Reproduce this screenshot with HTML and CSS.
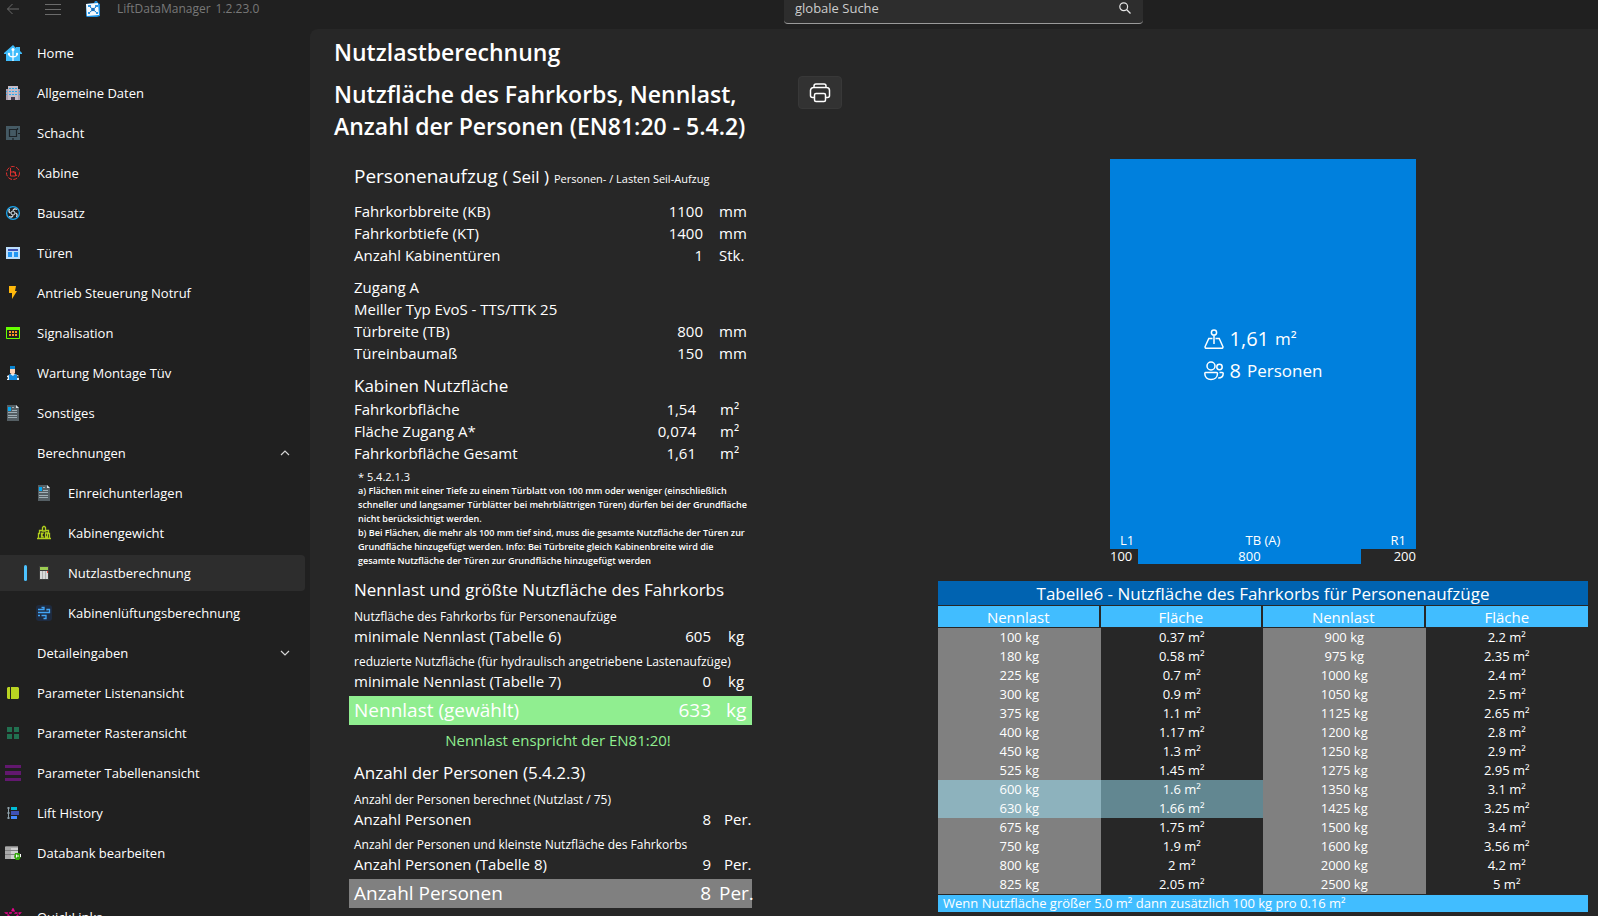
FILE: index.html
```html
<!DOCTYPE html>
<html lang="de">
<head>
<meta charset="utf-8">
<title>LiftDataManager</title>
<link rel="stylesheet" href="styles.css">
</head>
<body>
<header class="titlebar">
  <div class="brand">
    <button class="bar-btn back" aria-label="Zurück"><svg width="14" height="12" viewBox="0 0 14 12" fill="none" stroke="#6b6b6b"><path d="M13 6H1.500M6.500 1L1.500 6l5 5"/></svg></button>
    <button class="bar-btn menu" aria-label="Menü"><svg width="16" height="12" viewBox="0 0 16 12" stroke="#6b6b6b"><path d="M0 1.500h16M0 6.500h16M0 11.500h16"/></svg></button>
    <svg class="logo" width="16" height="16" viewBox="0 0 16 16"><path d="M1 3l8-1 1-2h2l1 2 2 1v12l-3 1H2l-1-1z" fill="#1b8fe0"/><path d="M1 3l12-1 1 12-12 1z" fill="#f4f9fd"/><path d="M4.500 5.500L8 8.500l3.500-3M4.500 11.500L8 8.500l3.500 3" stroke="#1670bd" stroke-width="1" fill="none"/><circle cx="8" cy="8.500" r="1.800" fill="#1670bd"/><path d="M3 4h3v2H3zM10 4h3v2h-3zM3 11h2v2H3zM11 11h2v2h-2z" fill="#2a96e6"/></svg>
    <span>LiftDataManager</span><span class="version">1.2.23.0</span>
  </div>
  <div class="search">
    <input type="text" placeholder="globale Suche" aria-label="globale Suche">
    <svg width="12" height="12" viewBox="0 0 12 12" fill="none" stroke="#e6e6e6" stroke-width="1.200"><circle cx="4.700" cy="4.700" r="3.900"/><path d="M7.500 7.500l4 4"/></svg>
  </div>
</header>
<div class="shell">
  <nav class="side">
    <ul class="nav">
      <li><a href="#"><svg viewBox="0 0 18 18"><path d="M9 1l3 3V3h4v4l2 2v1h-2v7H2v-7H0V9z" fill="#3fbcfb"/><path d="M9 5v12M5 10.500q0 2 4 2.500q4-.5 4-2.500" stroke="#fff" stroke-width="1.200" fill="none"/><circle cx="9" cy="5.500" r="1.500" fill="#fff"/><circle cx="5" cy="10" r="1.200" fill="#fff"/><circle cx="13" cy="10" r="1.200" fill="#fff"/></svg>Home</a></li>
      <li><a href="#"><svg viewBox="0 0 18 18"><path d="M2 5h2V2h10v3h2v11H2z" fill="#a99fae"/><path d="M4 2h10v14H4z" fill="#c4bcc8"/><path d="M5 4h2v1H5zM8 4h2v1H8zM11 4h2v1h-2zM5 7h2v1H5zM8 7h2v1H8zM11 7h2v1h-2zM5 10h2v1H5zM8 10h2v1H8zM11 10h2v1h-2zM2 7h1v1H2zM2 10h1v1H2zM15 7h1v1h-1zM15 10h1v1h-1z" fill="#27a9ee"/><path d="M7 13h4v3H7z" fill="#43394b"/></svg>Allgemeine Daten</a></li>
      <li><a href="#"><svg viewBox="0 0 18 18"><path d="M2 2h14v14H2z" fill="#455a64"/><path d="M5.500 5.500h7v7h-7zM12 5.500h1.500V4M9 14v2M14 9.500h2" fill="none" stroke="#1c2226" stroke-width="1.200"/></svg>Schacht</a></li>
      <li><a href="#"><svg viewBox="0 0 18 18" fill="none" stroke="#e0312f" stroke-width="1"><circle cx="9" cy="9" r="6.500" stroke-dasharray="4 1.500"/><path d="M6.500 4v8h5V8H7M9 7l4 5"/></svg>Kabine</a></li>
      <li><a href="#"><svg viewBox="0 0 18 18" fill="none"><circle cx="9" cy="9" r="6.400" stroke="#1aa5ee" stroke-width="1.300"/><path d="M9 6.500Q10 4 13 5.500M11.500 9Q14 10 12.500 13M9 11.500Q8 14 5 12.500M6.500 9Q4 8 5.500 5" stroke="#d8e4ea" stroke-width="1.300"/><circle cx="9" cy="9" r="2" stroke="#d8e4ea"/></svg>Bausatz</a></li>
      <li><a href="#"><svg viewBox="0 0 18 18"><path d="M2 3h14v12H2z" fill="#bbdefb"/><path d="M4 5h10v2H4z" fill="#3f51b5"/><path d="M4 8h4v5H4zM10 8h4v5h-4z" fill="#2196f3"/></svg>Türen</a></li>
      <li><a href="#"><svg viewBox="0 0 18 18"><path d="M5 2h7l-1 5h2l-5 8V9H5z" fill="#ffb90c"/></svg>Antrieb Steuerung Notruf</a></li>
      <li><a href="#"><svg viewBox="0 0 18 18"><path d="M2.500 4v10.500h13V4" fill="none" stroke="#66ff00" stroke-width="1"/><path d="M2 3h14v3H2z" fill="#66ff00"/><path d="M5 7h2v2H5zM8 7h2v2H8zM11 7h2v2h-2zM5 10h2v2H5zM8 10h2v2H8zM11 10h2v2h-2z" fill="#ff9326"/></svg>Signalisation</a></li>
      <li><a href="#"><svg viewBox="0 0 18 18"><path d="M6 2h5v3H6z" fill="#0a84d0"/><path d="M6 5h5v4l-2 2-3-2z" fill="#ffd3b6"/><path d="M3 16v-4l4-2h4l4 2v4z" fill="#e6eef5"/><path d="M6 10l3 2 2-2 2 1v5H5v-5z" fill="#148be0"/><path d="M13 12h2v2h-2zM3 13h1v2H3z" fill="#555"/></svg>Wartung Montage Tüv</a></li>
      <li><a href="#"><svg viewBox="0 0 18 18"><path d="M3 1h9l3 3v13H3z" fill="#545e63"/><path d="M12 1l3 3h-3z" fill="#dfe4e7"/><path d="M4 3h3v4H4z" fill="#03a9f4"/><path d="M8 6.500h5M4 8.500h9M4 11.500h9M4 13.500h9M8 3.500h2" stroke="#9fadb4"/></svg>Sonstiges</a></li>
      <li><button class="group" aria-expanded="true">Berechnungen<svg class="chev" viewBox="0 0 10 10" fill="none" stroke="#d6d6d6" stroke-width="1.200"><path d="M1 7l4-4 4 4"/></svg></button>
        <ul class="nav sub">
          <li><a href="#"><svg viewBox="0 0 18 18"><path d="M3 1h9l3 3v13H3z" fill="#545e63"/><path d="M12 1l3 3h-3z" fill="#dfe4e7"/><path d="M4 3h3v4H4z" fill="#03a9f4"/><path d="M8 6.500h5M4 8.500h9M4 11.500h9M4 13.500h9M8 3.500h2" stroke="#9fadb4"/></svg>Einreichunterlagen</a></li>
          <li><a href="#"><svg viewBox="0 0 18 18" fill="none" stroke="#b1cf1d" stroke-width="1.300"><path d="M2 14.500h14M3.500 14V9.500h1V6.500h3M14.500 14V9.500h-1V6.500h-3M7.500 7V3.500l1-1h1l1 1V7zM6.500 8.500v5M8.500 8.500l-2 2.500 2 2.500M10.500 9v4h2V9z"/></svg>Kabinengewicht</a></li>
          <li><a href="#" class="active" aria-current="page"><svg viewBox="0 0 18 18"><path d="M4 2h10v14H4z" fill="#3c3c3c"/><path d="M5 3h8v3H5z" fill="#9ccc52"/><path d="M5 7h8v8H5z" fill="#d9d9d9"/><path d="M7 7h1v8H7zM10 7h1v8h-1z" fill="#b0b0b0"/><path d="M12 7h1v2h-1z" fill="#f0473c"/></svg>Nutzlastberechnung</a></li>
          <li><a href="#"><svg viewBox="0 0 18 18" fill="none"><rect x="1" y="1" width="16" height="16" rx="3" fill="#1e2b40"/><path d="M3 5.500h6V3.500H6.500M3 8.500h11.500V5.500H12v1M3 11.500h2M6.500 11.500H11v3H8.500" stroke="#42a5f5" stroke-width="1.300"/></svg>Kabinenlüftungsberechnung</a></li>
        </ul>
      </li>
      <li><button class="group" aria-expanded="false">Detaileingaben<svg class="chev" viewBox="0 0 10 10" fill="none" stroke="#d6d6d6" stroke-width="1.200"><path d="M1 3l4 4 4-4"/></svg></button></li>
      <li><a href="#"><svg viewBox="0 0 18 18"><path d="M3 4l1-1h2v12H4l-1-1zM7 3h7l1 1v10l-1 1H7z" fill="#b9d422"/></svg>Parameter Listenansicht</a></li>
      <li><a href="#"><svg viewBox="0 0 18 18"><path d="M3 3h5v5H3zM10 3h5v5h-5zM3 10h5v5H3zM10 10h5v5h-5z" fill="#217050"/></svg>Parameter Rasteransicht</a></li>
      <li><a href="#"><svg viewBox="0 0 18 18"><path d="M1 1h16v3H1zM1 7h16v4H1zM1 14h16v3H1z" fill="#62186f"/></svg>Parameter Tabellenansicht</a></li>
      <li><a href="#"><svg viewBox="0 0 18 18"><path d="M4.500 3v12M3 4h3M3 9h3M3 14h3" stroke="#8fa2ac"/><path d="M7 3h6v3H7z" fill="#00bcd4"/><path d="M7 7h8v4H7z" fill="#3f51b5"/><path d="M7 12h6v3H7z" fill="#448aff"/></svg>Lift History</a></li>
      <li><a href="#"><svg viewBox="0 0 18 18"><path d="M2 2h12v13H1V3z" fill="#a9a9a9"/><path d="M7 4h7v11H7z" fill="#d0d0d0"/><path d="M1 6.500h13M1 10.500h13M2 2.500h12" stroke="#808080"/><path d="M11 9h4l2 2v2l-2 3h-3l-2-3z" fill="#35a80c"/><path d="M12.500 10.500v3M12 12h3M16.500 10v3" stroke="#fff"/></svg>Databank bearbeiten</a></li>
    </ul>
    <ul class="nav foot">
      <li><a href="#"><svg viewBox="0 0 18 18" fill="none" stroke="#e6008c" stroke-width="1.600"><path d="M9 1l2 4 5 0-4 4 2 6-5-3-5 3 2-6-4-4 5 0z" stroke-dasharray="3 1"/></svg>QuickLinks</a></li>
    </ul>
  </nav>
  <main class="panel">
    <h1>Nutzlastberechnung</h1>
    <div class="content">
      <section class="calc">
        <h2>Nutzfläche des Fahrkorbs, Nennlast, Anzahl der Personen (EN81:20 - 5.4.2)</h2>
        <div class="data">
          <p class="type">Personenaufzug <span class="drive">( Seil )</span> <small>Personen- / Lasten Seil-Aufzug</small></p>
          <div class="rows mm">
            <p><span>Fahrkorbbreite (KB)</span><b>1100</b><i>mm</i></p>
            <p><span>Fahrkorbtiefe (KT)</span><b>1400</b><i>mm</i></p>
            <p><span>Anzahl Kabinentüren</span><b>1</b><i>Stk.</i></p>
          </div>
          <div class="rows mm">
            <p><span>Zugang A</span></p>
            <p><span>Meiller Typ EvoS - TTS/TTK 25</span></p>
            <p><span>Türbreite (TB)</span><b>800</b><i>mm</i></p>
            <p><span>Türeinbaumaß</span><b>150</b><i>mm</i></p>
          </div>
          <h3>Kabinen Nutzfläche</h3>
          <div class="rows area">
            <p><span>Fahrkorbfläche</span><b>1,54</b><i>m²</i></p>
            <p><span>Fläche Zugang A*</span><b>0,074</b><i>m²</i></p>
            <p><span>Fahrkorbfläche Gesamt</span><b>1,61</b><i>m²</i></p>
          </div>
          <div class="notes">
            <p class="ref">* 5.4.2.1.3</p>
            <p>a) Flächen mit einer Tiefe zu einem Türblatt von 100 mm oder weniger (einschließlich<br>schneller und langsamer Türblätter bei mehrblättrigen Türen) dürfen bei der Grundfläche<br>nicht berücksichtigt werden.</p>
            <p>b) Bei Flächen, die mehr als 100 mm tief sind, muss die gesamte Nutzfläche der Türen zur<br>Grundfläche hinzugefügt werden. Info: Bei Türbreite gleich Kabinenbreite wird die<br>gesamte Nutzfläche der Türen zur Grundfläche hinzugefügt werden</p>
          </div>
          <h3>Nennlast und größte Nutzfläche des Fahrkorbs</h3>
          <div class="rows load">
            <p class="hint">Nutzfläche des Fahrkorbs für Personenaufzüge</p>
            <p><span>minimale Nennlast (Tabelle 6)</span><b>605</b><i>kg</i></p>
            <p class="hint">reduzierte Nutzfläche (für hydraulisch angetriebene Lastenaufzüge)</p>
            <p><span>minimale Nennlast (Tabelle 7)</span><b>0</b><i>kg</i></p>
            <p class="result ok"><span>Nennlast (gewählt)</span><b>633</b><i>kg</i></p>
          </div>
          <p class="message">Nennlast enspricht der EN81:20!</p>
          <h3>Anzahl der Personen (5.4.2.3)</h3>
          <div class="rows persons">
            <p class="hint">Anzahl der Personen berechnet (Nutzlast / 75)</p>
            <p><span>Anzahl Personen</span><b>8</b><i>Per.</i></p>
            <p class="hint">Anzahl der Personen und kleinste Nutzfläche des Fahrkorbs</p>
            <p><span>Anzahl Personen (Tabelle 8)</span><b>9</b><i>Per.</i></p>
            <p class="result"><span>Anzahl Personen</span><b>8</b><i>Per.</i></p>
          </div>
        </div>
      </section>
      <button class="print" aria-label="Drucken"><svg width="22" height="20" viewBox="0 0 22 20" fill="none" stroke="#fff" stroke-width="1.500" stroke-linejoin="round"><path d="M5.500 14.500H3.500a2 2 0 0 1-2-2V7.500a3 3 0 0 1 3-3h13a3 3 0 0 1 3 3v5a2 2 0 0 1-2 2h-2M5 4.500V3a2 2 0 0 1 2-2h8a2 2 0 0 1 2 2v1.500"/><rect x="5.500" y="10.500" width="11" height="8" rx="1.500"/></svg></button>
      <section class="result-view">
        <div class="cab">
          <div class="floor">
            <div class="facts">
              <p><svg width="20" height="20" viewBox="0 0 20 20" fill="none" stroke="#fff" stroke-width="1.500"><circle cx="10" cy="3.500" r="2.600"/><path d="M10 6.200V15M8.500 9.500H4.800L1 17.800q0 1.500 1 1.500h16q1 0 1-1.500L15.200 9.500h-3.700"/></svg><b>1,61</b> m²</p>
              <p><svg width="20" height="20" viewBox="0 0 20 20" fill="none" stroke="#fff" stroke-width="1.500"><circle cx="7" cy="5" r="4"/><circle cx="15.500" cy="6" r="2.700"/><path d="M1.500 11.500h11q1 0 1 1c0 4-3 6-6.500 6S.8 16.500.8 12.500q0-1 .7-1zM15.500 11.500h2.700q1 0 1 1c0 3-2 4.500-5 4.500"/></svg><b>8</b> Personen</p>
            </div>
            <div class="labels"><span>L1</span><span>TB (A)</span><span>R1</span></div>
          </div>
          <div class="door"><span>100</span><span class="opening">800</span><span class="right">200</span></div>
        </div>
        <table class="table6">
          <caption>Tabelle6 - Nutzfläche des Fahrkorbs für Personenaufzüge</caption>
          <thead><tr><th>Nennlast</th><th>Fläche</th><th>Nennlast</th><th>Fläche</th></tr></thead>
          <tbody>
            <tr><td>100 kg</td><td>0.37 m²</td><td>900 kg</td><td>2.2 m²</td></tr>
            <tr><td>180 kg</td><td>0.58 m²</td><td>975 kg</td><td>2.35 m²</td></tr>
            <tr><td>225 kg</td><td>0.7 m²</td><td>1000 kg</td><td>2.4 m²</td></tr>
            <tr><td>300 kg</td><td>0.9 m²</td><td>1050 kg</td><td>2.5 m²</td></tr>
            <tr><td>375 kg</td><td>1.1 m²</td><td>1125 kg</td><td>2.65 m²</td></tr>
            <tr><td>400 kg</td><td>1.17 m²</td><td>1200 kg</td><td>2.8 m²</td></tr>
            <tr><td>450 kg</td><td>1.3 m²</td><td>1250 kg</td><td>2.9 m²</td></tr>
            <tr><td>525 kg</td><td>1.45 m²</td><td>1275 kg</td><td>2.95 m²</td></tr>
            <tr class="hit"><td>600 kg</td><td>1.6 m²</td><td>1350 kg</td><td>3.1 m²</td></tr>
            <tr class="hit"><td>630 kg</td><td>1.66 m²</td><td>1425 kg</td><td>3.25 m²</td></tr>
            <tr><td>675 kg</td><td>1.75 m²</td><td>1500 kg</td><td>3.4 m²</td></tr>
            <tr><td>750 kg</td><td>1.9 m²</td><td>1600 kg</td><td>3.56 m²</td></tr>
            <tr><td>800 kg</td><td>2 m²</td><td>2000 kg</td><td>4.2 m²</td></tr>
            <tr><td>825 kg</td><td>2.05 m²</td><td>2500 kg</td><td>5 m²</td></tr>
          </tbody>
          <tfoot><tr><td colspan="4">Wenn Nutzfläche größer 5.0 m² dann zusätzlich 100 kg pro 0.16 m²</td></tr></tfoot>
        </table>
      </section>
    </div>
  </main>
</div>
</body>
</html>
```
FILE: styles.css
```css
* { box-sizing: border-box; }
body {
  margin: 0;
  height: 100vh;
  overflow: hidden;
  display: flex;
  flex-direction: column;
  background: #202020;
  color: #fff;
  font: 15px/22px "Open Sans", "Noto Sans", sans-serif;
}
p, h1, h2, h3, ul { margin: 0; padding: 0; }
ul { list-style: none; }
b, i { font-weight: 400; font-style: normal; }
button { border: 0; background: none; color: inherit; font: inherit; padding: 0; }

/* Title bar */
.titlebar {
  flex: none;
  display: grid;
  grid-template-columns: 784px 359px 1fr;
  align-items: start;
  height: 29px;
}
.brand {
  display: flex;
  align-items: center;
  height: 17px;
  padding-left: 6px;
  color: #787878;
  font-size: 12px;
}
.bar-btn { display: flex; }
.menu { margin-left: 25px; }
.logo { margin: 0 16px 0 24px; }
.version { margin-left: 5px; }
.search {
  display: flex;
  height: 24px;
  padding: 0 12px 7px 11px;
  align-items: center;
  justify-content: space-between;
  background: #2d2d2d;
  border-bottom: 1px solid #9a9a9a;
  border-radius: 0 0 4px 4px;
}
.search input {
  flex: 1;
  min-width: 0;
  height: 16px;
  padding: 0;
  border: 0;
  outline: 0;
  background: none;
  color: #ccc;
  font: 13px/16px "Open Sans", "Noto Sans", sans-serif;
}
.search input::placeholder { color: #ccc; opacity: 1; }

/* Navigation */
.shell { flex: 1; min-height: 0; display: flex; }
.side {
  flex: none;
  width: 310px;
  padding: 6px 5px 0 0;
  overflow: hidden;
  font-size: 13px;
}
.nav { display: flex; flex-direction: column; gap: 4px; }
.nav a, .group {
  display: flex;
  align-items: center;
  width: 100%;
  height: 36px;
  padding-left: 4px;
  border-radius: 0 4px 4px 0;
  color: #fff;
  text-decoration: none;
}
.nav svg { flex: none; width: 18px; height: 18px; margin-right: 15px; }
.group { padding-left: 37px; justify-content: space-between; }
.nav .chev { width: 10px; height: 10px; }
.sub { margin-top: 4px; }
.sub a { padding-left: 35px; }
.sub a.active {
  padding-left: 24px;
  background: #2d2d2d;
}
.active::before {
  content: "";
  width: 3px;
  height: 16px;
  margin-right: 8px;
  border-radius: 2px;
  background: #4cc2ff;
}
.foot { margin-top: 28px; }

/* Page */
.panel {
  flex: 1;
  min-width: 0;
  padding: 7px 10px 0 24px;
  background: #272727;
  border-top-left-radius: 8px;
  overflow: hidden;
}
h1, h2 { font-size: 23px; line-height: 32px; font-weight: 600; }
.content {
  display: grid;
  grid-template-columns: 448px 44px 1fr;
  column-gap: 16px;
  align-items: start;
}
h2 { margin-top: 10px; }
.data { width: 403px; margin: 20px 0 0 15px; }
.data h3, .type, .rows p { padding-left: 5px; }
.type { font-size: 19px; line-height: 28px; white-space: nowrap; }
.drive { font-size: 17px; line-height: 20px; }
.type small { font-size: 11px; font-weight: 500; line-height: 14px; }
.rows { margin-top: 10px; }
.rows p {
  display: grid;
  grid-template-columns: 1fr auto auto;
  white-space: nowrap;
}
.mm i { width: 33px; margin-left: 16px; }
.area i { width: 32px; margin-left: 24px; }
.load i { width: 24px; margin-left: 17px; }
.persons i { width: 28px; margin-left: 13px; }
.data h3 { margin-top: 10px; font-size: 17px; line-height: 24px; font-weight: 400; }
h3 + .rows { margin-top: 0; }
.rows .hint { display: block; padding-top: 6px; font-size: 12px; line-height: 17px; }
.rows .result {
  margin-top: 4px;
  background: #808080;
  font-size: 19px;
  line-height: 29px;
}
.rows .ok { background: #90ee90; }
.load .result i { width: 26px; margin-left: 15px; }
.persons .result i { width: 33px; margin-left: 8px; }
.message { margin-top: 4px; padding-left: 15px; color: #90ee90; text-align: center; }
.notes {
  margin-top: 6px;
  padding-left: 9px;
  font-size: 9px;
  font-weight: 600;
  line-height: 14px;
  white-space: nowrap;
}
.notes .ref { font-size: 11px; font-weight: 400; }

.print {
  display: grid;
  place-items: center;
  height: 33px;
  margin-top: 8px;
  background: #323232;
  border: 1px solid #383838;
  border-radius: 4px;
}

/* Cab plan */
.result-view { margin: 91px 0 0 80px; }
.cab { width: 306px; margin: 0 auto; font-size: 13px; }
.floor {
  display: flex;
  flex-direction: column;
  justify-content: space-between;
  align-items: center;
  height: 390px;
  padding-top: 164px;
  background: #0080dd;
}
.facts { font-size: 17px; line-height: 32px; }
.facts p { display: flex; align-items: center; gap: 6px; }
.facts b { font-size: 20px; }
.labels {
  display: grid;
  grid-template-columns: 1fr auto 1fr;
  width: 100%;
  padding: 0 10px;
  line-height: 18px;
}
.labels :last-child, .door .right { text-align: right; }
.door { display: grid; grid-template-columns: 28px 223px 55px; line-height: 15px; }
.opening { background: #0080dd; text-align: center; }

/* Load table */
.table6 {
  width: 100%;
  margin-top: 17px;
  table-layout: fixed;
  border-spacing: 0;
  font-size: 13px;
  line-height: 19px;
  text-align: center;
}
.table6 caption { padding-top: 1px; background: #0063b1; font-size: 17px; line-height: 23px; }
.table6 th, .table6 td { padding: 0; }
.table6 th {
  padding-top: 1px;
  background: #41bdff;
  background-clip: padding-box;
  border: solid #272727;
  border-width: 1px 2px 1px 0;
  font-size: 15px;
  font-weight: 400;
  line-height: 20px;
}
.table6 th:last-child { border-right: 0; }
.table6 tbody td:nth-child(odd) { background: #808080; }
.table6 .hit td:nth-child(1) { background: #8db2bd; }
.table6 .hit td:nth-child(2) { background: #628791; }
.table6 tfoot td {
  padding-left: 5px;
  background: #41bdff;
  background-clip: padding-box;
  border-top: 1px solid #272727;
  line-height: 17px;
}
.table6 tfoot td { text-align: left; }
```
